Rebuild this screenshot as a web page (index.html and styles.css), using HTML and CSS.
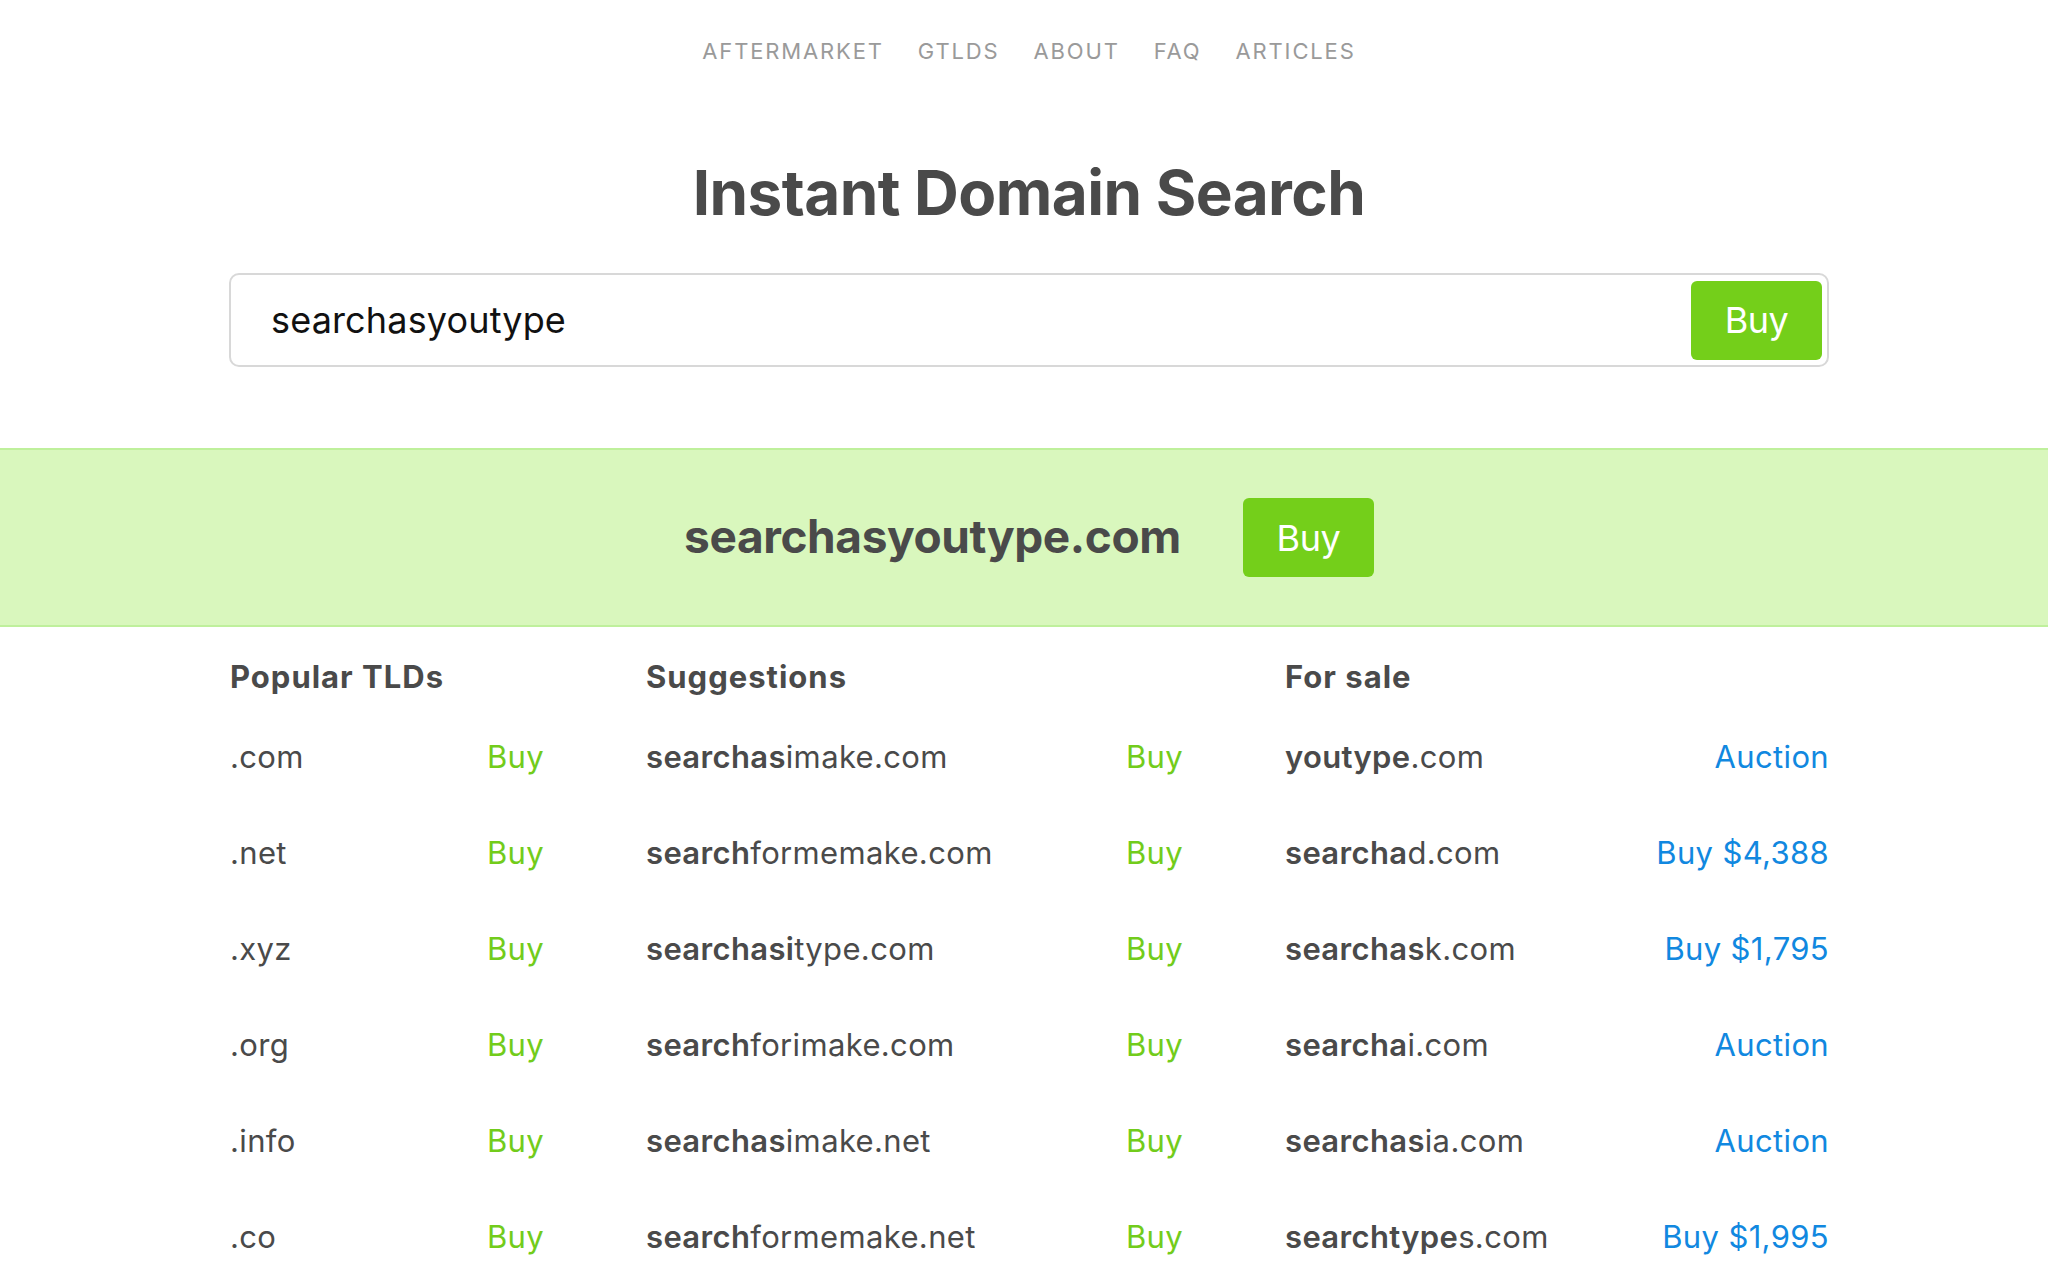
FILE: index.html
```html
<!DOCTYPE html>
<html lang="en">
<head>
<meta charset="utf-8">
<title>Instant Domain Search</title>
<link rel="stylesheet" href="styles.css">
</head>
<body>
<nav class="nav wrap">
  <a class="nav-link" href="#">AFTERMARKET</a>
  <a class="nav-link" href="#">GTLDS</a>
  <a class="nav-link" href="#">ABOUT</a>
  <a class="nav-link" href="#">FAQ</a>
  <a class="nav-link" href="#">ARTICLES</a>
</nav>

<h1 class="title wrap">Instant Domain Search</h1>

<div class="search wrap">
  <div class="search-input">searchasyoutype</div>
  <button class="btn">Buy</button>
</div>

<section class="band">
  <div class="band-inner wrap">
    <span class="band-domain">searchasyoutype.com</span>
    <button class="btn">Buy</button>
  </div>
</section>

<main class="results wrap">
  <div class="col col-tld">
    <h2 class="col-title">Popular TLDs</h2>
    <div class="row"><span class="name">.com</span><a class="buy" href="#">Buy</a></div>
    <div class="row"><span class="name">.net</span><a class="buy" href="#">Buy</a></div>
    <div class="row"><span class="name">.xyz</span><a class="buy" href="#">Buy</a></div>
    <div class="row"><span class="name">.org</span><a class="buy" href="#">Buy</a></div>
    <div class="row"><span class="name">.info</span><a class="buy" href="#">Buy</a></div>
    <div class="row"><span class="name">.co</span><a class="buy" href="#">Buy</a></div>
  </div>
  <div class="col col-sug">
    <h2 class="col-title">Suggestions</h2>
    <div class="row"><span class="name"><b>searchas</b>imake.com</span><a class="buy" href="#">Buy</a></div>
    <div class="row"><span class="name"><b>search</b>formemake.com</span><a class="buy" href="#">Buy</a></div>
    <div class="row"><span class="name"><b>searchasi</b>type.com</span><a class="buy" href="#">Buy</a></div>
    <div class="row"><span class="name"><b>search</b>forimake.com</span><a class="buy" href="#">Buy</a></div>
    <div class="row"><span class="name"><b>searchas</b>imake.net</span><a class="buy" href="#">Buy</a></div>
    <div class="row"><span class="name"><b>search</b>formemake.net</span><a class="buy" href="#">Buy</a></div>
  </div>
  <div class="col col-sale">
    <h2 class="col-title">For sale</h2>
    <div class="row"><span class="name"><b>youtype</b>.com</span><a class="sale" href="#">Auction</a></div>
    <div class="row"><span class="name"><b>searcha</b>d.com</span><a class="sale" href="#">Buy $4,388</a></div>
    <div class="row"><span class="name"><b>searchas</b>k.com</span><a class="sale" href="#">Buy $1,795</a></div>
    <div class="row"><span class="name"><b>searcha</b>i.com</span><a class="sale" href="#">Auction</a></div>
    <div class="row"><span class="name"><b>searchas</b>ia.com</span><a class="sale" href="#">Auction</a></div>
    <div class="row"><span class="name"><b>searchtype</b>s.com</span><a class="sale" href="#">Buy $1,995</a></div>
  </div>
</main>
</body>
</html>
```

FILE: styles.css
```css
* { box-sizing: border-box; }

html, body {
  margin: 0;
  padding: 0;
  background: #ffffff;
  overflow: hidden;
}

body {
  font-family: Inter, "Noto Sans", "Liberation Sans", sans-serif;
  color: #4a4a4a;
}

.wrap {
  width: 1600px;
  margin-left: calc(50% - 795px);
}

/* nav */
.nav {
  display: flex;
  justify-content: center;
  gap: 34px;
  padding-top: 36px;
  line-height: 30px;
}

.nav-link {
  font-size: 22px;
  letter-spacing: 1.85px;
  color: #9a9a9a;
  text-decoration: none;
}

/* title */
.title {
  margin-top: 96px;
  margin-bottom: 0;
  text-align: center;
  font-size: 62px;
  line-height: 62px;
  font-weight: 700;
  letter-spacing: -0.55px;
  color: #4a4a4a;
}

/* search box */
.search {
  margin-top: 49px;
  height: 94px;
  border: 2px solid #d8d8d8;
  border-radius: 10px;
  display: flex;
  align-items: center;
  justify-content: space-between;
  padding: 5px 5px 5px 40px;
}

.search-input {
  font-size: 36px;
  color: #111;
  letter-spacing: 0.15px;
}

.btn {
  width: 131px;
  height: 79px;
  border: none;
  border-radius: 6px;
  background: #74cf1a;
  color: #fff;
  font-family: inherit;
  font-size: 36px;
  font-weight: 400;
  letter-spacing: -0.5px;
  padding: 0;
  cursor: pointer;
}

/* green band */
.band {
  margin-top: 81px;
  background: #d9f7bd;
  border-top: 2px solid #bff09c;
  border-bottom: 2px solid #bff09c;
  height: 179px;
}

.band-inner {
  height: 100%;
  display: flex;
  align-items: center;
  justify-content: center;
  gap: 62px;
}

.band-domain {
  font-size: 46px;
  font-weight: 700;
  letter-spacing: -0.4px;
  color: #4a4a4a;
  padding-bottom: 4px;
}

/* results */
.results {
  display: grid;
  grid-template-columns: 314px 537px 544px;
  column-gap: 102px;
  padding-top: 30px;
  padding-left: 1px;
}

.col-title {
  margin: 0 0 12px 0;
  font-size: 31px;
  line-height: 40px;
  font-weight: 700;
  letter-spacing: 1px;
  color: #4a4a4a;
}

.row {
  display: flex;
  justify-content: space-between;
  align-items: baseline;
  height: 96px;
  line-height: 96px;
  font-size: 31px;
  letter-spacing: 0.35px;
}

.name { color: #4a4a4a; }
.name b { font-weight: 600; }

.buy {
  color: #72cc1b;
  text-decoration: none;
}

.sale {
  color: #1188e0;
  text-decoration: none;
}
```
